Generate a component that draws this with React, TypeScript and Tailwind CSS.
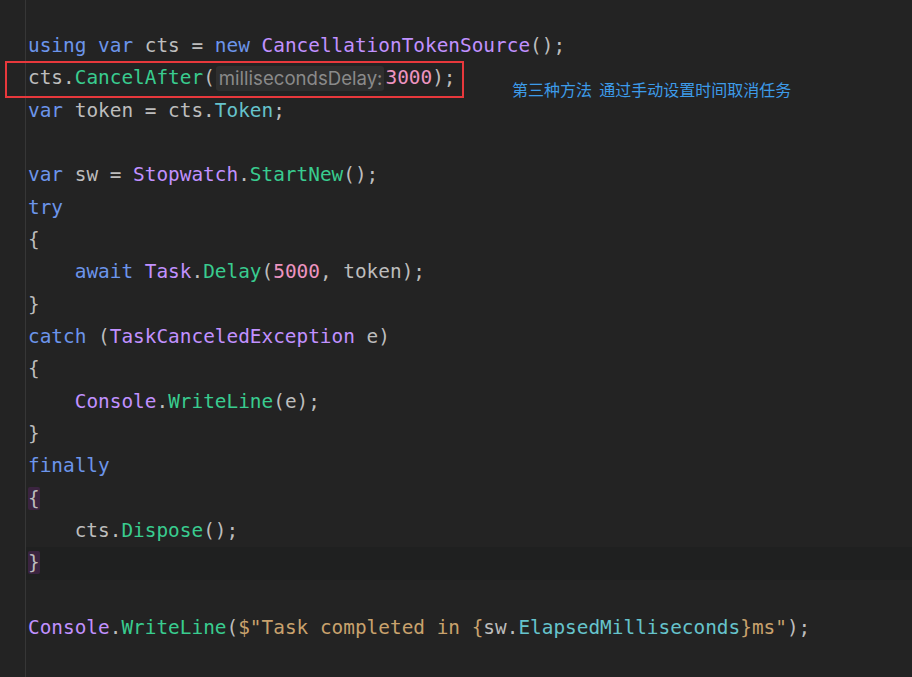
import React from "react";

type Tok = { t: string; c?: string };

const kw = "text-[#6c95eb]";
const cls = "text-[#c191ff]";
const fn = "text-[#39cc8f]";
const prop = "text-[#66c3cc]";
const num = "text-[#ed94c0]";
const str = "text-[#c9a26d]";

const lines: Tok[][] = [
  [{ t: "using", c: kw }, { t: " " }, { t: "var", c: kw }, { t: " cts = " }, { t: "new", c: kw }, { t: " " }, { t: "CancellationTokenSource", c: cls }, { t: "();" }],
  [], // CancelAfter line rendered separately
  [{ t: "var", c: kw }, { t: " token = cts." }, { t: "Token", c: prop }, { t: ";" }],
  [],
  [{ t: "var", c: kw }, { t: " sw = " }, { t: "Stopwatch", c: cls }, { t: "." }, { t: "StartNew", c: fn }, { t: "();" }],
  [{ t: "try", c: kw }],
  [{ t: "{" }],
  [{ t: "    " }, { t: "await", c: kw }, { t: " " }, { t: "Task", c: cls }, { t: "." }, { t: "Delay", c: fn }, { t: "(" }, { t: "5000", c: num }, { t: ", token);" }],
  [{ t: "}" }],
  [{ t: "catch", c: kw }, { t: " (" }, { t: "TaskCanceledException", c: cls }, { t: " e)" }],
  [{ t: "{" }],
  [{ t: "    " }, { t: "Console", c: cls }, { t: "." }, { t: "WriteLine", c: fn }, { t: "(e);" }],
  [{ t: "}" }],
  [{ t: "finally", c: kw }],
  [], // { brace-matched
  [{ t: "    cts." }, { t: "Dispose", c: fn }, { t: "();" }],
  [], // } brace-matched
  [],
  [
    { t: "Console", c: cls },
    { t: "." },
    { t: "WriteLine", c: fn },
    { t: "(" },
    { t: '$"Task completed in {', c: str },
    { t: "sw." },
    { t: "ElapsedMilliseconds", c: prop },
    { t: '}ms"', c: str },
    { t: ");" },
  ],
  [],
];

function Brace({ ch }: { ch: string }) {
  return <span className="bg-[#3b2440] rounded-[2px]">{ch}</span>;
}

export default function App() {
  return (
    <div className="relative w-[912px] h-[677px] overflow-hidden bg-[#232323] flex">
      <div className="w-[26px] shrink-0 border-r border-[#363636]" />
      <div
        className="flex-1 pt-[30px] text-[19.4px] text-[#bdbdbd] whitespace-pre"
        style={{ fontFamily: '"DejaVu Sans Mono", "Liberation Mono", monospace' }}
      >
        {lines.map((line, i) => {
          let content: React.ReactNode;
          if (i === 1) {
            content = (
              <>
                cts.<span className={fn}>CancelAfter</span>(
                <span
                  className="inline-block bg-[#2f2f2f] rounded-[3px] pl-[3px] pr-[2px] mx-[1px] text-[18.6px] leading-[25px] text-[#8a8a8a] align-middle"
                  style={{ fontFamily: '"Inter", "Noto Sans", sans-serif' }}
                >
                  millisecondsDelay:
                </span>
                <span className={num}>3000</span>);
              </>
            );
          } else if (i === 14) {
            content = <Brace ch="{" />;
          } else if (i === 16) {
            content = <Brace ch="}" />;
          } else {
            content = line.map((tok, j) => (
              <span key={j} className={tok.c}>
                {tok.t}
              </span>
            ));
          }
          return (
            <div
              key={i}
              className={`h-[32.33px] leading-[32.33px] pl-[2px] ${i === 16 ? "bg-[#1f2020]" : ""}`}
            >
              {content}
            </div>
          );
        })}
      </div>

      {/* annotation overlay */}
      <div className="absolute left-[5px] top-[61px] w-[459px] h-[37px] border-2 border-[#e8383c]" />
      <div
        className="absolute left-[512px] top-[78px] text-[16px] leading-[22px] text-[#3d9be9] whitespace-pre"
        style={{ fontFamily: '"Noto Sans CJK SC", sans-serif' }}
      >
        第三种方法  通过手动设置时间取消任务
      </div>
    </div>
  );
}
